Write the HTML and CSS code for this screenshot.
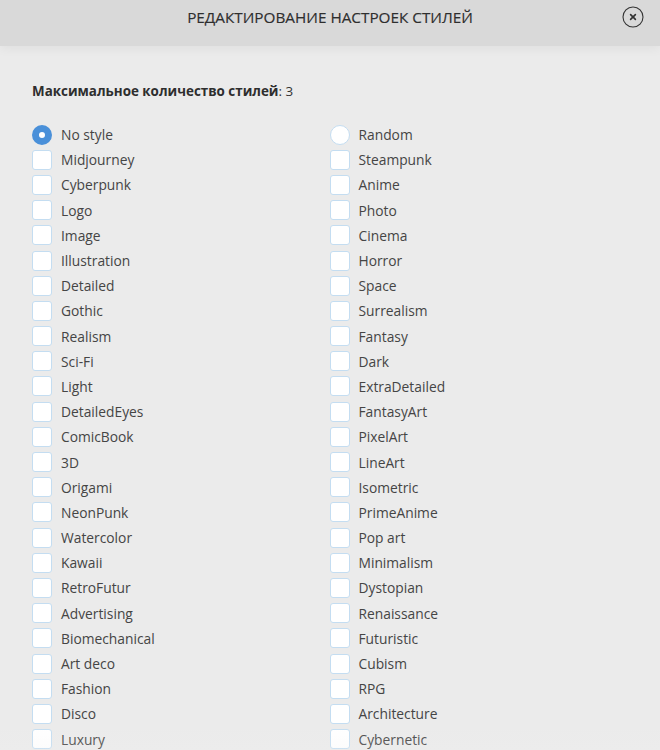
FILE: index.html
```html
<!DOCTYPE html>
<html lang="ru">
<head>
<meta charset="utf-8">
<link rel="stylesheet" href="styles.css">
</head>
<body>
<div class="modal">
  <header class="modal-header">
    <h1 class="modal-title">РЕДАКТИРОВАНИЕ НАСТРОЕК СТИЛЕЙ</h1>
    <button class="close-btn" aria-label="Закрыть">
      <svg width="22" height="22" viewBox="0 0 22 22">
        <circle cx="11" cy="11" r="10" fill="none" stroke="#333" stroke-width="1.1"/>
        <path d="M8.6 8.6 L13.4 13.4 M13.4 8.6 L8.6 13.4" stroke="#333" stroke-width="1.6" stroke-linecap="round"/>
      </svg>
    </button>
  </header>
  <main class="modal-body">
    <p class="max-count"><b>Максимальное количество стилей</b>: 3</p>
    <div class="options">
      <ul class="col">
        <li class="opt"><span class="radio checked"></span>No style</li>
        <li class="opt"><span class="box"></span>Midjourney</li>
        <li class="opt"><span class="box"></span>Cyberpunk</li>
        <li class="opt"><span class="box"></span>Logo</li>
        <li class="opt"><span class="box"></span>Image</li>
        <li class="opt"><span class="box"></span>Illustration</li>
        <li class="opt"><span class="box"></span>Detailed</li>
        <li class="opt"><span class="box"></span>Gothic</li>
        <li class="opt"><span class="box"></span>Realism</li>
        <li class="opt"><span class="box"></span>Sci-Fi</li>
        <li class="opt"><span class="box"></span>Light</li>
        <li class="opt"><span class="box"></span>DetailedEyes</li>
        <li class="opt"><span class="box"></span>ComicBook</li>
        <li class="opt"><span class="box"></span>3D</li>
        <li class="opt"><span class="box"></span>Origami</li>
        <li class="opt"><span class="box"></span>NeonPunk</li>
        <li class="opt"><span class="box"></span>Watercolor</li>
        <li class="opt"><span class="box"></span>Kawaii</li>
        <li class="opt"><span class="box"></span>RetroFutur</li>
        <li class="opt"><span class="box"></span>Advertising</li>
        <li class="opt"><span class="box"></span>Biomechanical</li>
        <li class="opt"><span class="box"></span>Art deco</li>
        <li class="opt"><span class="box"></span>Fashion</li>
        <li class="opt"><span class="box"></span>Disco</li>
        <li class="opt"><span class="box"></span>Luxury</li>
      </ul>
      <ul class="col">
        <li class="opt"><span class="radio"></span>Random</li>
        <li class="opt"><span class="box"></span>Steampunk</li>
        <li class="opt"><span class="box"></span>Anime</li>
        <li class="opt"><span class="box"></span>Photo</li>
        <li class="opt"><span class="box"></span>Cinema</li>
        <li class="opt"><span class="box"></span>Horror</li>
        <li class="opt"><span class="box"></span>Space</li>
        <li class="opt"><span class="box"></span>Surrealism</li>
        <li class="opt"><span class="box"></span>Fantasy</li>
        <li class="opt"><span class="box"></span>Dark</li>
        <li class="opt"><span class="box"></span>ExtraDetailed</li>
        <li class="opt"><span class="box"></span>FantasyArt</li>
        <li class="opt"><span class="box"></span>PixelArt</li>
        <li class="opt"><span class="box"></span>LineArt</li>
        <li class="opt"><span class="box"></span>Isometric</li>
        <li class="opt"><span class="box"></span>PrimeAnime</li>
        <li class="opt"><span class="box"></span>Pop art</li>
        <li class="opt"><span class="box"></span>Minimalism</li>
        <li class="opt"><span class="box"></span>Dystopian</li>
        <li class="opt"><span class="box"></span>Renaissance</li>
        <li class="opt"><span class="box"></span>Futuristic</li>
        <li class="opt"><span class="box"></span>Cubism</li>
        <li class="opt"><span class="box"></span>RPG</li>
        <li class="opt"><span class="box"></span>Architecture</li>
        <li class="opt"><span class="box"></span>Cybernetic</li>
      </ul>
    </div>
  </main>
  <div class="fade"></div>
</div>
</body>
</html>
```

FILE: styles.css
```css
* { box-sizing: border-box; }
html, body {
  margin: 0;
  padding: 0;
  height: 100%;
  overflow: hidden;
}
body {
  background: #ebebeb;
  font-family: "Open Sans", "Noto Sans", sans-serif;
  color: #444;
}
.modal {
  position: relative;
  height: 750px;
  overflow: hidden;
}
.modal-header {
  height: 46px;
  background: #d9d9d9;
  display: flex;
  align-items: center;
  justify-content: center;
  position: relative;
  box-shadow: 0 3px 10px rgba(0,0,0,0.05);
}
.modal-title {
  margin: 0;
  font-size: 15.3px;
  font-weight: 400;
  color: #2e2e2e;
  margin-top: -12px;
  -webkit-text-stroke: 0.15px #2e2e2e;
}
.close-btn {
  position: absolute;
  right: 16px;
  top: 6px;
  width: 22px;
  height: 22px;
  padding: 0;
  border: 0;
  background: transparent;
  display: flex;
}
.modal-body {
  padding: 35px 33px 0 32px;
}
.max-count {
  margin: 0 0 21px;
  font-size: 13.4px;
  line-height: 20px;
  color: #333;
}
.max-count b { font-weight: 700; color: #2e2e2e; }
.options {
  display: grid;
  grid-template-columns: 1fr 1fr;
}
.col {
  list-style: none;
  margin: 0;
  padding: 0;
}
.opt {
  display: flex;
  align-items: center;
  gap: 9px;
  height: 25.2px;
  font-size: 13.8px;
  color: #454545;
}
.box {
  width: 20px;
  height: 20px;
  background: #fff;
  border: 1px solid #c4ddf1;
  border-radius: 3px;
  flex: none;
}
.radio {
  width: 20px;
  height: 20px;
  background: #fff;
  border: 1px solid #c4ddf1;
  border-radius: 50%;
  flex: none;
}
.radio.checked {
  background: #fff;
  border: 7px solid #4a90d9;
}
.fade {
  position: absolute;
  left: 0;
  right: 0;
  bottom: 0;
  height: 24px;
  background: linear-gradient(rgba(240,240,240,0), rgba(240,240,240,0.2));
  pointer-events: none;
}
```
